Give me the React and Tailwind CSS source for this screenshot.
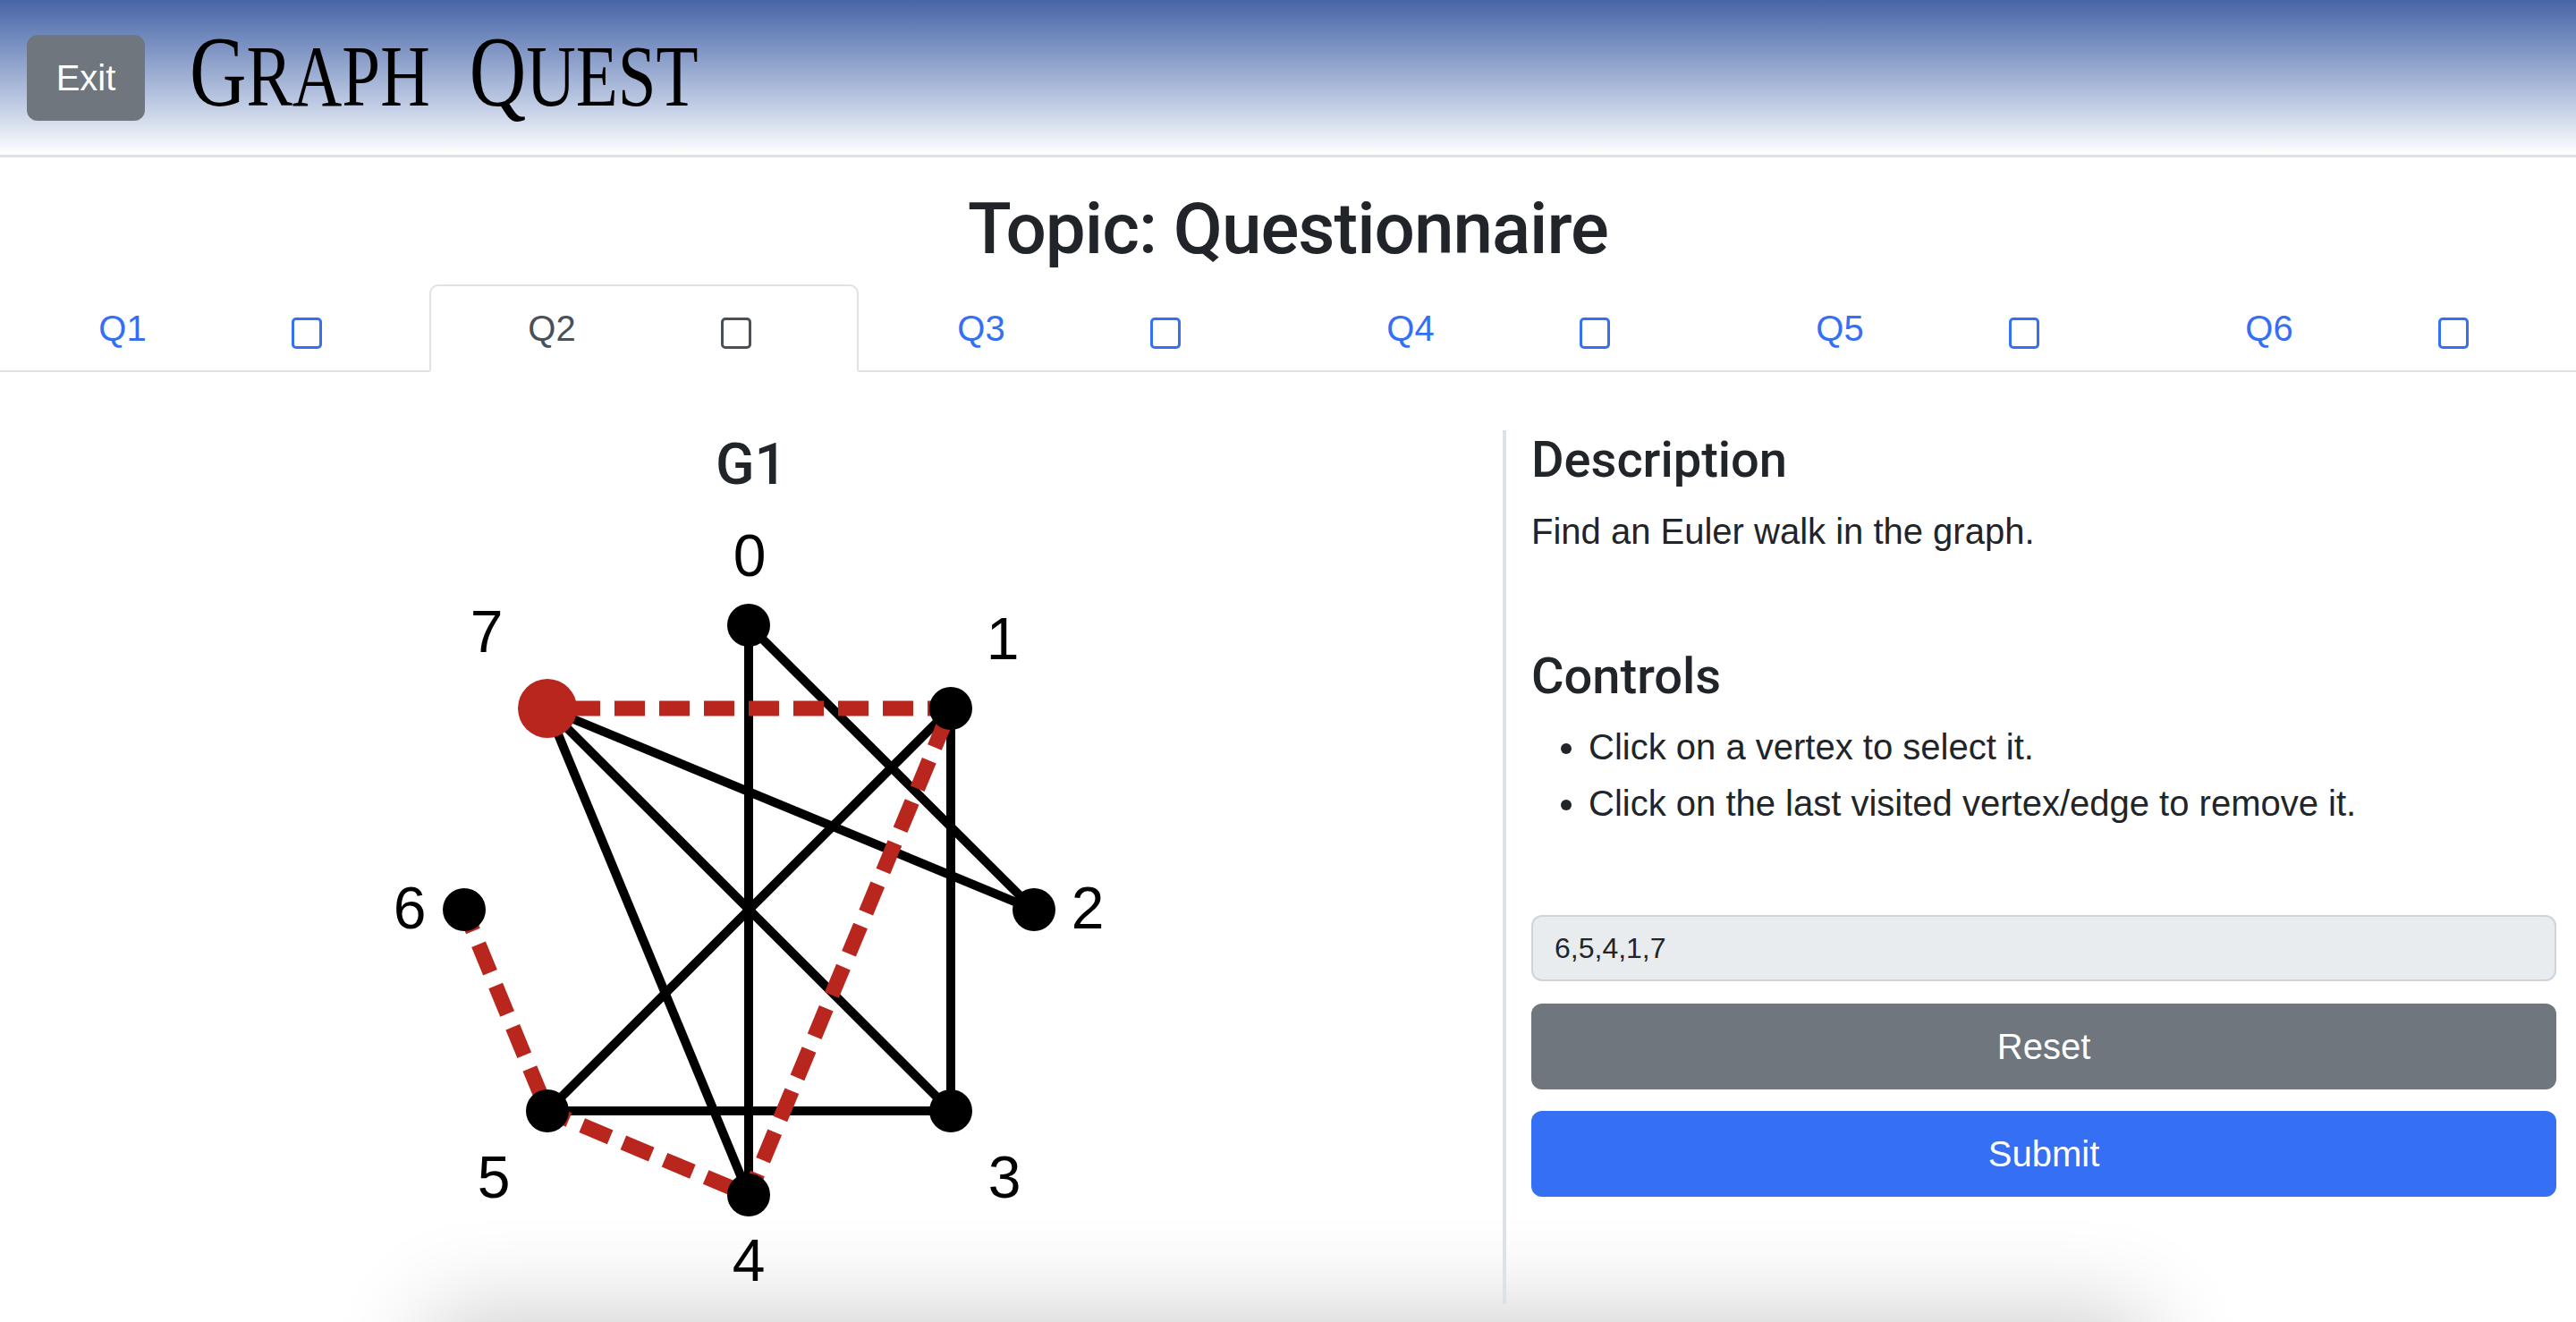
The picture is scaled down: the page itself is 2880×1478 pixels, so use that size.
import React from 'react';

const NODES = [
  [837, 699],
  [1063, 792],
  [1156, 1017],
  [1063, 1242],
  [837, 1336],
  [612, 1242],
  [519, 1017],
  [612, 792],
];

const LABELS = [
  [838, 620],
  [1121, 713],
  [1216, 1014],
  [1123, 1315],
  [837, 1408],
  [552, 1315],
  [458, 1014],
  [544, 705],
];

const EDGES = [
  [0, 4],
  [0, 2],
  [7, 2],
  [7, 3],
  [7, 4],
  [1, 5],
  [1, 3],
  [5, 3],
];

const WALK = [6, 5, 4, 1, 7];
const SELECTED = 7;

const TABS = ['Q1', 'Q2', 'Q3', 'Q4', 'Q5', 'Q6'];
const ACTIVE_TAB = 1;

function Header() {
  return (
    <header className="flex h-[176px] items-center border-b-[3px] border-[#dde1e6] bg-linear-to-b from-[#4865a6] to-white px-[30px]">
      <button className="h-[96px] w-[132px] rounded-[12px] bg-[#6f767e] text-[40px] text-white">
        Exit
      </button>
      <h1 className="mb-[14px] ml-[50px] origin-left scale-x-[0.785] whitespace-nowrap font-['Liberation_Serif',serif] text-[112px] leading-none text-black">
        <span>G</span>
        <span className="text-[98px]">RAPH</span>
        <span className="inline-block w-[56px]"></span>
        <span>Q</span>
        <span className="text-[98px]">UEST</span>
      </h1>
    </header>
  );
}

function Tabs() {
  return (
    <div className="flex border-b-2 border-[#dee2e6]">
      {TABS.map((t, i) => {
        const active = i === ACTIVE_TAB;
        return (
          <div
            key={t}
            className={
              active
                ? 'z-10 -mb-[2px] flex h-[98px] flex-1 items-center rounded-t-[10px] border-2 border-[#dee2e6] border-b-white bg-white px-[32px] text-[#495057]'
                : '-mb-[2px] flex h-[98px] flex-1 items-center rounded-t-[10px] border-2 border-transparent px-[32px] text-[#346ff4]'
            }
          >
            <div className="flex-1 text-center text-[40px]">{t}</div>
            <div className="flex flex-1 justify-center">
              <span
                className={
                  active
                    ? 'mt-[10px] block h-[35px] w-[34px] rounded-[5px] border-[3px] border-[#495057]'
                    : 'mt-[10px] block h-[35px] w-[34px] rounded-[5px] border-[3px] border-[#346ff4]'
                }
              />
            </div>
          </div>
        );
      })}
    </div>
  );
}

function Graph() {
  const walkEdges = WALK.slice(1).map((v, i) => [WALK[i], v]);
  return (
    <svg width="1680" height="900" viewBox="0 558 1680 900" className="block">
      {EDGES.map(([a, b]) => (
        <line
          key={`${a}-${b}`}
          x1={NODES[a][0]}
          y1={NODES[a][1]}
          x2={NODES[b][0]}
          y2={NODES[b][1]}
          stroke="#000"
          strokeWidth="10"
        />
      ))}
      {walkEdges.map(([a, b]) => (
        <line
          key={`w${a}-${b}`}
          x1={NODES[a][0]}
          y1={NODES[a][1]}
          x2={NODES[b][0]}
          y2={NODES[b][1]}
          stroke="#b8261e"
          strokeWidth="17"
          strokeDasharray="34 16"
          strokeDashoffset="8"
        />
      ))}
      {NODES.map(([x, y], i) => (
        <circle
          key={i}
          cx={x}
          cy={y}
          r={i === SELECTED ? 33 : 24}
          fill={i === SELECTED ? '#b8261e' : '#000'}
        />
      ))}
      {LABELS.map(([x, y], i) => (
        <text
          key={i}
          x={x}
          y={y + 24}
          textAnchor="middle"
          fontSize="66"
          fontFamily="'Liberation Sans', Arial, sans-serif"
          fill="#000"
        >
          {i}
        </text>
      ))}
    </svg>
  );
}

export default function App() {
  return (
    <div className="h-screen overflow-hidden bg-white font-['Liberation_Sans',Arial,sans-serif] text-[#212529]">
      <Header />
      <main>
        <h1 className="mb-[14px] mt-[32px] text-center font-['Roboto',sans-serif] text-[80px] font-medium leading-[96px] tracking-[-1px]">
          Topic: Questionnaire
        </h1>
        <Tabs />

        <div className="mt-[65px] flex">
          {/* graph column */}
          <div className="w-[1680px] shrink-0">
            <h2 className="text-center font-['Roboto',sans-serif] text-[64px] font-medium leading-[77px]">G1</h2>
            <Graph />
          </div>

          {/* description + controls */}
          <div className="flex-1 border-l-[4px] border-[#dee2e6] pl-[28px] pr-[22px]">
            <h3 className="mb-[16px] font-['Roboto',sans-serif] text-[56px] font-medium leading-[67px]">Description</h3>
            <p className="mb-[99px] text-[40px] leading-[60px]">Find an Euler walk in the graph.</p>
            <h3 className="mb-[14px] font-['Roboto',sans-serif] text-[56px] font-medium leading-[67px]">Controls</h3>
            <ul className="list-disc pl-[64px] text-[40px] leading-[63px]">
              <li>Click on a vertex to select it.</li>
              <li>Click on the last visited vertex/edge to remove it.</li>
            </ul>
            <div className="mt-[93px] flex h-[74px] items-center rounded-[12px] border-2 border-[#ced4da] bg-[#e9ecef] px-[24px] text-[32px]">
              6,5,4,1,7
            </div>
            <button className="mt-[25px] block h-[96px] w-full rounded-[12px] bg-[#6f767e] text-[40px] text-white">
              Reset
            </button>
            <button className="mt-[24px] block h-[96px] w-full rounded-[12px] bg-[#346ff4] text-[40px] text-white">
              Submit
            </button>
          </div>
        </div>

        <div className="mx-auto mt-[20px] h-[300px] w-[1900px] bg-white shadow-[0_0_100px_10px_rgba(0,0,0,0.2)]"></div>
      </main>
    </div>
  );
}
